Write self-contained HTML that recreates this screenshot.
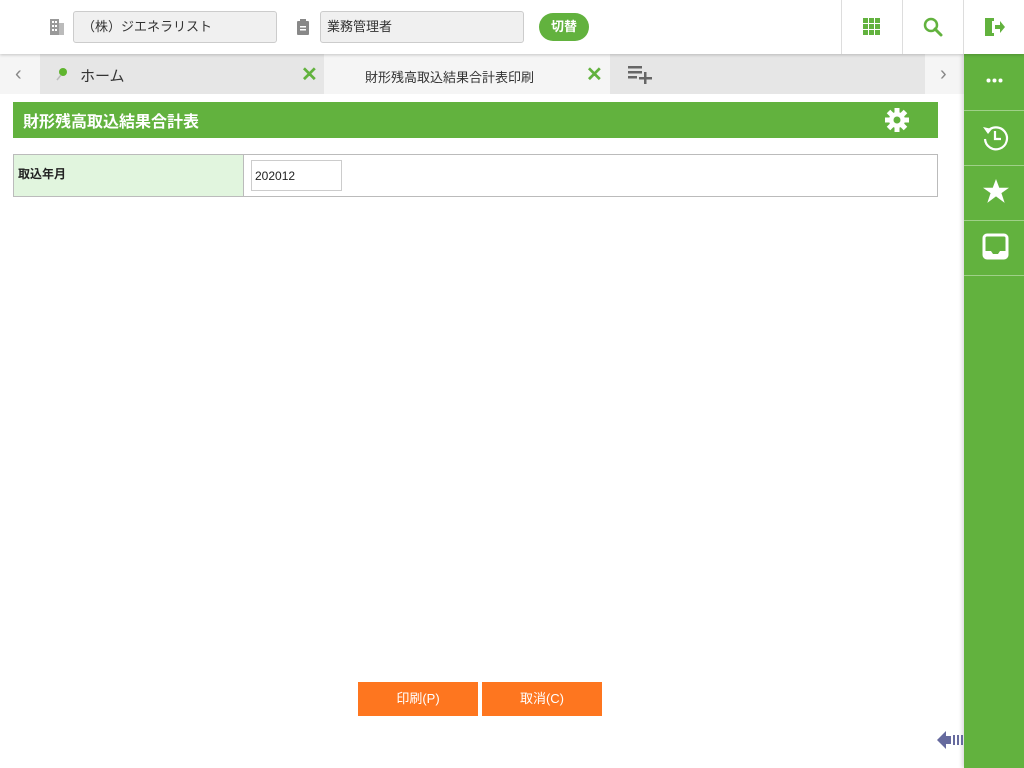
<!DOCTYPE html>
<html><head><meta charset="utf-8"><style>
*{margin:0;padding:0;box-sizing:border-box}
body{width:1024px;height:768px;position:relative;overflow:hidden;background:#fff;font-family:"Liberation Sans","Noto Sans CJK JP",sans-serif;font-size:13px;color:#333}
.a{position:absolute}
.box{position:absolute;background:#f0f0f0;border:1px solid #ccc;border-radius:3px;height:32px;top:11px;line-height:30px;padding-left:8px;font-size:13px;color:#333}
.sep{position:absolute;top:0;width:1px;height:54px;background:#ddd}
.sb{position:absolute;left:964px;width:60px;height:1px;background:#9fd088}
</style></head><body>
<div class="a" style="left:0;top:0;width:1024px;height:54px;background:#fff;box-shadow:0 1px 3px rgba(0,0,0,.2);z-index:2">
<svg class="a" style="left:49px;top:18px" width="16" height="18" viewBox="0 0 16 18"><rect x="1" y="1" width="9" height="16" fill="#999"/><rect x="10" y="5" width="5" height="12" fill="#bbb"/><g fill="#fff"><rect x="3" y="3" width="2" height="2"/><rect x="6" y="3" width="2" height="2"/><rect x="3" y="7" width="2" height="2"/><rect x="6" y="7" width="2" height="2"/><rect x="3" y="11" width="2" height="2"/><rect x="6" y="11" width="2" height="2"/></g></svg>
<div class="box" style="left:73px;width:204px">（株）ジエネラリスト</div>
<svg class="a" style="left:297px;top:19px" width="12" height="16" viewBox="0 0 12 16"><rect x="0" y="2" width="12" height="14" rx="1" fill="#888"/><rect x="3" y="0" width="6" height="4" fill="#888"/><rect x="3" y="7" width="6" height="1.5" fill="#fff"/><rect x="3" y="10" width="6" height="1.5" fill="#fff"/></svg>
<div class="box" style="left:320px;width:204px;padding-left:6px">業務管理者</div>
<div class="a" style="left:539px;top:13px;width:50px;height:28px;border-radius:14px;background:#62b23e;color:#fff;font-weight:bold;text-align:center;line-height:28px;font-size:13px">切替</div>
<div class="sep" style="left:841px"></div><div class="sep" style="left:902px"></div><div class="sep" style="left:963px"></div>
<svg class="a" style="left:863px;top:18px" width="17" height="17" viewBox="0 0 17 17" fill="#62b23e"><rect x="0" y="0" width="5" height="5"/><rect x="6" y="0" width="5" height="5"/><rect x="12" y="0" width="5" height="5"/><rect x="0" y="6" width="5" height="5"/><rect x="6" y="6" width="5" height="5"/><rect x="12" y="6" width="5" height="5"/><rect x="0" y="12" width="5" height="5"/><rect x="6" y="12" width="5" height="5"/><rect x="12" y="12" width="5" height="5"/></svg>
<svg class="a" style="left:923px;top:17px" width="20" height="20" viewBox="0 0 20 20"><circle cx="8" cy="8" r="6" fill="none" stroke="#62b23e" stroke-width="2.5"/><path d="M12 12l6 6" stroke="#62b23e" stroke-width="3" stroke-linecap="round"/></svg>
<svg class="a" style="left:983px;top:16px" width="22" height="22" viewBox="0 0 22 22" fill="#62b23e"><path d="M2 2h9v3h-2v12h2v3H2z"/><path d="M2 2l7 3v15l-7-2z"/><path d="M12 9h5V5l5 6-5 6v-4h-5z"/></svg>
</div>
<div class="a" style="left:0;top:54px;width:964px;height:40px;background:#f5f5f5"></div>
<div class="a" style="left:15px;top:63px;color:#888;font-size:20px">‹</div>
<div class="a" style="left:40px;top:54px;width:284px;height:40px;background:#e6e6e6"></div>
<svg class="a" style="left:56px;top:67px" width="12" height="14" viewBox="0 0 12 14"><circle cx="7" cy="5" r="4" fill="#5fb52e"/><path d="M5 8L1 13" stroke="#bbb" stroke-width="1.5"/></svg>
<div class="a" style="left:80px;top:65px;font-size:15px;color:#333">ホーム</div>
<div class="a" style="left:301px;top:62px;font-size:20px;font-weight:bold;color:#62b23e">✕</div>
<div class="a" style="left:365px;top:67px;font-size:13px;color:#333">財形残高取込結果合計表印刷</div>
<div class="a" style="left:586px;top:62px;font-size:20px;font-weight:bold;color:#62b23e">✕</div>
<div class="a" style="left:610px;top:54px;width:315px;height:40px;background:#e6e6e6"></div>
<svg class="a" style="left:628px;top:66px" width="25" height="18" viewBox="0 0 25 18" fill="#666"><rect x="0" y="0" width="14" height="2.5"/><rect x="0" y="5" width="14" height="2.5"/><rect x="0" y="10" width="9" height="2.5"/><rect x="11" y="11" width="13" height="2.5"/><rect x="16" y="6" width="2.5" height="12"/></svg>
<div class="a" style="left:940px;top:63px;color:#888;font-size:20px">›</div>
<div class="a" style="left:964px;top:54px;width:60px;height:714px;background:#62b23e;box-shadow:-2px 0 4px rgba(0,0,0,.15)"></div>
<div class="sb" style="top:110px"></div><div class="sb" style="top:165px"></div><div class="sb" style="top:220px"></div><div class="sb" style="top:275px"></div>
<svg class="a" style="left:986px;top:78px" width="17" height="5" viewBox="0 0 17 5" fill="#fff"><circle cx="2.5" cy="2.5" r="2"/><circle cx="8.5" cy="2.5" r="2"/><circle cx="14.5" cy="2.5" r="2"/></svg>
<svg class="a" style="left:981px;top:123px" width="28" height="28" viewBox="0 0 28 28" fill="none" stroke="#fff" stroke-width="2.2"><path d="M6 9A11 11 0 1 1 4 16"/><path d="M2 4l5 7 4-5z" fill="#fff" stroke="none"/><path d="M14 8v8h6"/></svg>
<svg class="a" style="left:983px;top:179px" width="26" height="25" viewBox="0 0 24 23" fill="#fff"><path d="M12 0l3 8h9l-7 5 3 9-8-6-8 6 3-9-7-5h9z"/></svg>
<svg class="a" style="left:982px;top:233px" width="27" height="27" viewBox="0 0 27 27"><rect x="2" y="2" width="23" height="23" rx="3" fill="none" stroke="#fff" stroke-width="3"/><path d="M3 18h6l2 3h5l2-3h6v6H3z" fill="#fff"/></svg>
<div class="a" style="left:13px;top:102px;width:925px;height:36px;background:#62b23e"></div>
<div class="a" style="left:23px;top:108px;color:#fff;font-weight:bold;font-size:16px">財形残高取込結果合計表</div>
<svg class="a" style="left:885px;top:108px" width="24" height="24" viewBox="0 0 24 24"><g fill="#fff"><circle cx="12" cy="12" r="8"/><g id="t"><rect x="9.5" y="0" width="5" height="5"/><rect x="9.5" y="19" width="5" height="5"/></g><use href="#t" transform="rotate(45 12 12)"/><use href="#t" transform="rotate(90 12 12)"/><use href="#t" transform="rotate(135 12 12)"/></g><circle cx="12" cy="12" r="3.5" fill="#62b23e"/></svg>
<div class="a" style="left:13px;top:154px;width:925px;height:43px;border:1px solid #bbb"></div>
<div class="a" style="left:14px;top:155px;width:230px;height:41px;background:#e1f5de;border-right:1px solid #bbb"></div>
<div class="a" style="left:18px;top:165px;font-weight:bold;font-size:12px;color:#222">取込年月</div>
<div class="a" style="left:251px;top:160px;width:91px;height:31px;border:1px solid #ccc;line-height:30px;padding-left:3px;font-size:12px;color:#222">202012</div>
<div class="a" style="left:358px;top:682px;width:120px;height:34px;background:#fe761f;color:#fff;text-align:center;line-height:34px;font-size:13px">印刷(P)</div>
<div class="a" style="left:482px;top:682px;width:120px;height:34px;background:#fe761f;color:#fff;text-align:center;line-height:34px;font-size:13px">取消(C)</div>
<svg class="a" style="left:937px;top:730px" width="26" height="20" viewBox="0 0 26 20" fill="#666a9e"><path d="M0 10L9 1v5h5v8H9v5z"/><rect x="16" y="5" width="2" height="10"/><rect x="20" y="5" width="2" height="10"/><rect x="24" y="5" width="2" height="10"/></svg>
</body></html>
